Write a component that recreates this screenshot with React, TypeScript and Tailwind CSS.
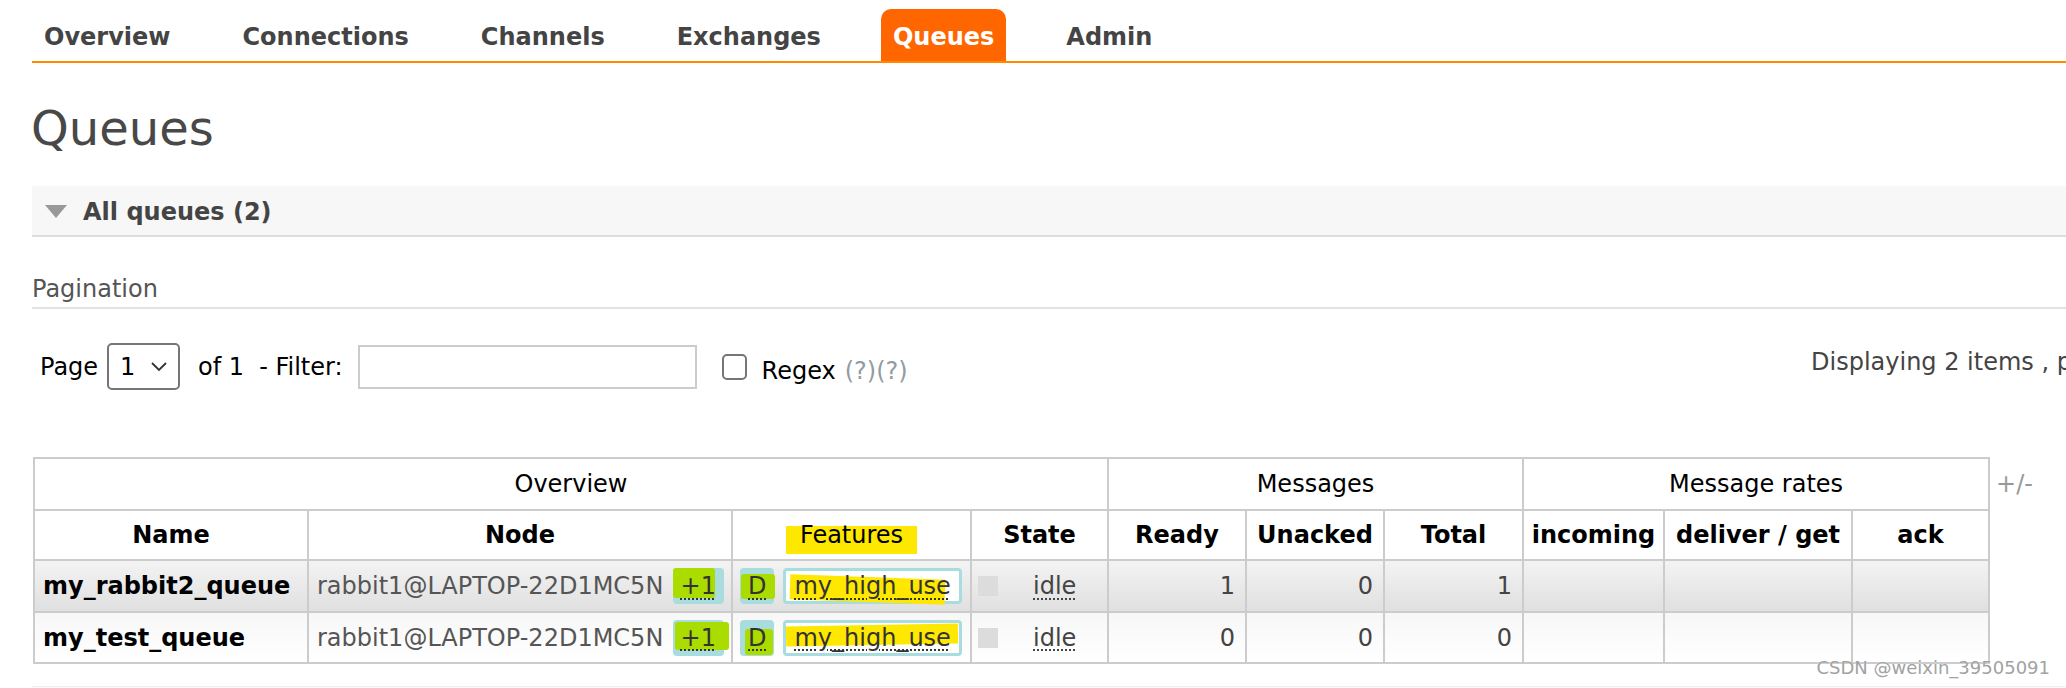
import React from "react";

type QueueType = {
  name: string;
  node: string;
  ready: number;
  unacked: number;
  total: number;
  cellBg: string;
  plusMark: string;
  dMark: string;
  policyMark: string;
};

const tabs = ["Overview", "Connections", "Channels", "Exchanges", "Queues", "Admin"];

const queues: QueueType[] = [
  {
    name: "my_rabbit2_queue",
    node: "rabbit1@LAPTOP-22D1MC5N",
    ready: 1,
    unacked: 0,
    total: 1,
    cellBg: "bg-linear-to-b from-[#f3f3f3] to-[#e0e0e0]",
    plusMark: "left-0 right-[9px] top-0 bottom-[6px]",
    dMark: "left-px -right-px top-[6px] bottom-[5px]",
    policyMark: "left-[4px] right-[13px] top-[6px] -bottom-px rotate-[2deg]",
  },
  {
    name: "my_test_queue",
    node: "rabbit1@LAPTOP-22D1MC5N",
    ready: 0,
    unacked: 0,
    total: 0,
    cellBg: "bg-linear-to-b from-[#f7f7f7] to-white",
    plusMark: "left-[2px] -right-[5px] top-[2px] bottom-[6px]",
    dMark: "left-[5px] right-px top-[9px] bottom-px",
    policyMark: "left-0 right-0 top-[2px] bottom-[8px] -rotate-1",
  },
];

const cell = "border-2 border-[#ccc]";

const App = () => {
  return (
    <div className="relative h-[688px] w-[2066px] overflow-hidden bg-white font-['DejaVu_Sans',sans-serif] text-[24px] leading-[28px] text-[#444]">
      {/* top menu */}
      <div className="mt-[9px] ml-[32px] flex gap-[48px] border-b-2 border-[#ff8a00]">
        {tabs.map((t) => (
          <div
            key={t}
            className={
              t === "Queues"
                ? "h-[52px] rounded-t-[10px] bg-[#ff6600] px-[12px] pt-[14px] font-bold text-white"
                : "h-[52px] px-[12px] pt-[14px] font-bold text-[#444]"
            }
          >
            {t}
          </div>
        ))}
      </div>

      <div className="pl-[32px]">
        <h1 className="mt-[37px] -ml-px text-[48px] leading-[56px] font-normal text-[#484848]">
          Queues
        </h1>

        {/* section header */}
        <div className="mt-[30px] flex h-[51px] items-start border-b-2 border-[#ddd] bg-[#f7f7f7] pt-[12px]">
          <svg className="mt-[7px] ml-[13px]" width="22" height="13" viewBox="0 0 22 13">
            <polygon points="0,0 22,0 11,13" fill="#999" />
          </svg>
          <span className="ml-[16px] font-bold text-[#444]">All queues (2)</span>
        </div>

        <div className="mt-[38px] border-b-2 border-[#e2e2e2] pb-[4px] text-[#555]">Pagination</div>

        {/* pagination row */}
        <div className="mt-[34px] flex h-[47px]">
          <div className="flex w-[1779px] shrink-0 items-center pl-[8px] text-black">
            <span>Page</span>
            <div className="ml-[9px] flex h-[47px] w-[73px] items-center rounded-[5px] border-2 border-[#767676] pl-[11px]">
              <span>1</span>
              <svg className="ml-[16px]" width="16" height="10" viewBox="0 0 16 10">
                <polyline points="1,1 8,8 15,1" fill="none" stroke="#333" strokeWidth="1.8" />
              </svg>
            </div>
            <span className="ml-[18px]">of 1</span>
            <span className="ml-[15px]">- Filter:</span>
            <div className="ml-[15px] h-[44px] w-[339px] border-2 border-[#ccc] bg-white" />
            <div className="ml-[25px] h-[26px] w-[25px] rounded-[5px] border-2 border-[#767676]" />
            <span className="ml-[15px] mt-[8px]">Regex</span>
            <span className="ml-[9px] mt-[8px] text-[#939ba3]">(?)(?)</span>
          </div>
          <span className="mt-[5px] whitespace-nowrap text-[#444]">
            Displaying 2 items , page size up to:
          </span>
        </div>

        {/* queues table */}
        <div className="mt-[67px] ml-px flex items-start">
          <table className="w-[1957px] table-fixed border-collapse">
            <colgroup>
              <col className="w-[274px]" />
              <col className="w-[424px]" />
              <col className="w-[239px]" />
              <col className="w-[137px]" />
              <col className="w-[138px]" />
              <col className="w-[138px]" />
              <col className="w-[139px]" />
              <col className="w-[141px]" />
              <col className="w-[188px]" />
              <col className="w-[137px]" />
            </colgroup>
            <thead>
              <tr className="h-[52px]">
                <th colSpan={4} className={`${cell} font-normal text-black`}>Overview</th>
                <th colSpan={3} className={`${cell} font-normal text-black`}>Messages</th>
                <th colSpan={3} className={`${cell} font-normal text-black`}>Message rates</th>
              </tr>
              <tr className="h-[50px] text-black">
                <th className={cell}>Name</th>
                <th className={cell}>Node</th>
                <th className={`${cell} font-normal`}>
                  <span className="relative isolate inline-block">
                    <span className="absolute -left-[14px] -right-[14px] top-[5px] -bottom-[5px] -z-10 bg-[#ffe800]" />
                    Features
                  </span>
                </th>
                <th className={cell}>State</th>
                <th className={cell}>Ready</th>
                <th className={cell}>Unacked</th>
                <th className={cell}>Total</th>
                <th className={cell}>incoming</th>
                <th className={cell}>deliver / get</th>
                <th className={cell}>ack</th>
              </tr>
            </thead>
            <tbody>
              {queues.map((q, i) => (
                <tr key={q.name} className={i === 0 ? "h-[52px]" : "h-[51px]"}>
                  <td className={`${cell} ${q.cellBg} pl-[8px] font-bold text-black`}>{q.name}</td>
                  <td className={`${cell} ${q.cellBg} pl-[8px] pr-[7px]`}>
                    <div className="flex items-center justify-between">
                      <span className="text-[#555]">{q.node}</span>
                      <span className="relative isolate rounded-[4px] bg-[#a9dcdf] px-[8px] py-[4px] text-[#333]">
                        <span className={`absolute -z-10 rounded-[3px] bg-[#aadc00] ${q.plusMark}`} />
                        <span className="underline decoration-dotted decoration-[1.5px] underline-offset-[4px]">+1</span>
                      </span>
                    </div>
                  </td>
                  <td className={`${cell} ${q.cellBg} pl-[7px]`}>
                    <div className="flex items-center">
                      <span className="relative isolate rounded-[4px] bg-[#a9dcdf] px-[8px] py-[4px] text-[#333]">
                        <span className={`absolute -z-10 rounded-[3px] bg-[#aadc00] ${q.dMark}`} />
                        <span className="underline decoration-dotted decoration-[1.5px] underline-offset-[4px]">D</span>
                      </span>
                      <span className="relative isolate ml-[9px] rounded-[4px] border-[3px] border-[#a9dcdf] bg-white px-[8px] py-[1px] text-[#333]">
                        <span className={`absolute -z-10 bg-[#ffe800] ${q.policyMark}`} />
                        <span className="underline decoration-dotted decoration-[1.5px] underline-offset-[4px]">my_high_use</span>
                      </span>
                    </div>
                  </td>
                  <td className={`${cell} ${q.cellBg} pl-[6px]`}>
                    <div className="flex items-center">
                      <span className="h-[20px] w-[20px] bg-[#dcdcdc]" />
                      <span className="ml-[35px] text-[#444] underline decoration-dotted decoration-[1.5px] underline-offset-[4px]">
                        idle
                      </span>
                    </div>
                  </td>
                  <td className={`${cell} ${q.cellBg} pr-[10px] text-right`}>{q.ready}</td>
                  <td className={`${cell} ${q.cellBg} pr-[10px] text-right`}>{q.unacked}</td>
                  <td className={`${cell} ${q.cellBg} pr-[10px] text-right`}>{q.total}</td>
                  <td className={`${cell} ${q.cellBg}`}></td>
                  <td className={`${cell} ${q.cellBg}`}></td>
                  <td className={`${cell} ${q.cellBg}`}></td>
                </tr>
              ))}
            </tbody>
          </table>
          <span className="mt-[13px] ml-[6px] text-[#999]">+/-</span>
        </div>

        <div className="mt-[22px] h-[49px] border-t border-[#f0f0f0] bg-[#fafafa]" />
      </div>

      {/* watermark */}
      <div className="absolute right-[16px] bottom-[10px] text-[18px] leading-[20px] text-[#a2a2a2] [text-shadow:0_0_1px_#fff]">
        CSDN @weixin_39505091
      </div>
    </div>
  );
};

export default App;
